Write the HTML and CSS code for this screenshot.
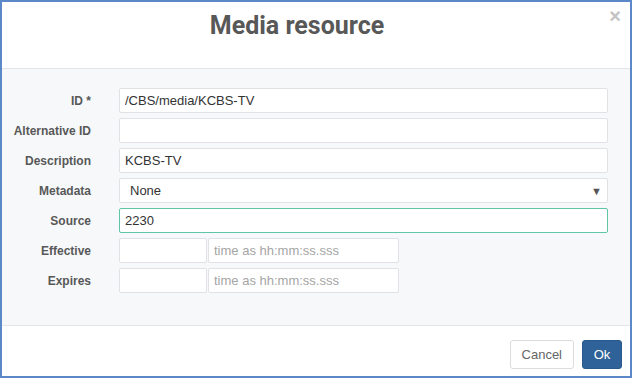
FILE: index.html
```html
<!DOCTYPE html>
<html lang="en">

<head>
  <meta charset="UTF-8">
  <meta name="viewport" content="width=device-width, initial-scale=1.0">
  <title>Media resource</title>
  <link rel="stylesheet" href="styles.css">
</head>

<body>
  <div class="modal">
    <div class="modal-header">
      <h1>Media resource</h1>
      <span class="close">&times;</span>
    </div>

    <div class="modal-body">
      <form class="form">
        <label for="resId">ID *</label>
        <input type="text" id="resId" value="/CBS/media/KCBS-TV">

        <label for="altId">Alternative ID</label>
        <input type="text" id="altId">

        <label for="desc">Description</label>
        <input type="text" id="desc" value="KCBS-TV">

        <label for="meta">Metadata</label>
        <div class="select">
          <span>None</span>
          <span class="arrow">&#9660;</span>
        </div>

        <label for="source">Source</label>
        <input type="text" id="source" class="active" value="2230">

        <label>Effective</label>
        <div class="date-time">
          <input type="text" class="date">
          <input type="text" class="time" placeholder="time as hh:mm:ss.sss">
        </div>

        <label>Expires</label>
        <div class="date-time">
          <input type="text" class="date">
          <input type="text" class="time" placeholder="time as hh:mm:ss.sss">
        </div>
      </form>
    </div>

    <div class="modal-footer">
      <button class="btn">Cancel</button>
      <button class="btn btn-primary">Ok</button>
    </div>
  </div>
</body>

</html>
```

FILE: styles.css
```css
* {
  margin: 0;
  padding: 0;
  box-sizing: border-box;
}

body {
  font-family: "Liberation Sans", Arial, sans-serif;
  color: #555;
  background-color: #fff;
}

.modal {
  display: flex;
  flex-direction: column;
  width: 632px;
  height: 378px;
  border: 2px solid #5b88c6;
  background-color: #fff;
}

.modal-header {
  position: relative;
  height: 67px;
  padding-right: 38px;
  border-bottom: 1px solid #e3e5e8;
  text-align: center;
}

h1 {
  padding-top: 9px;
  font-family: Roboto, "Liberation Sans", sans-serif;
  font-size: 25px;
  font-weight: 700;
  color: #585858;
}

/* botão de fechar no canto */
.close {
  position: absolute;
  top: 3px;
  right: 9px;
  font-size: 20px;
  font-weight: 700;
  color: #c4c4c4;
}

.modal-body {
  height: 257px;
  padding: 19px 22px 0 0;
  background-color: #f7f8fa;
  border-bottom: 1px solid #e3e5e8;
}

.form {
  display: grid;
  grid-template-columns: 89px 1fr;
  grid-auto-rows: 25px;
  column-gap: 28px;
  row-gap: 5px;
}

label {
  align-self: center;
  text-align: right;
  font-size: 12px;
  font-weight: 700;
  color: #585858;
}

input,
.select {
  height: 25px;
  width: 100%;
  padding: 0 5px;
  font-family: "Liberation Sans", Arial, sans-serif;
  font-size: 13px;
  color: #333;
  background-color: #fff;
  border: 1px solid #e0e2e5;
  border-radius: 2px;
  outline: none;
}

input::placeholder {
  color: #a5a5a5;
}

.active {
  border-color: #5ec5a6;
}

.select {
  display: flex;
  align-items: center;
  justify-content: space-between;
  padding: 0 5px 0 10px;
}

.arrow {
  font-size: 11px;
  color: #555;
}

.date-time {
  display: flex;
  gap: 1px;
}

.date {
  width: 88px;
}

.time {
  width: 191px;
}

.modal-footer {
  display: flex;
  justify-content: flex-end;
  gap: 8px;
  flex: 1;
  padding: 14px 8px 0 0;
}

.btn {
  height: 29px;
  padding: 0 11px;
  font-family: "Liberation Sans", Arial, sans-serif;
  font-size: 13px;
  color: #666;
  background-color: #fff;
  border: 1px solid #dcdcdc;
  border-radius: 3px;
  cursor: pointer;
}

.btn-primary {
  width: 40px;
  padding: 0;
  color: #fff;
  background-color: #2e6298;
  border-color: #2a5a8c;
}
```
